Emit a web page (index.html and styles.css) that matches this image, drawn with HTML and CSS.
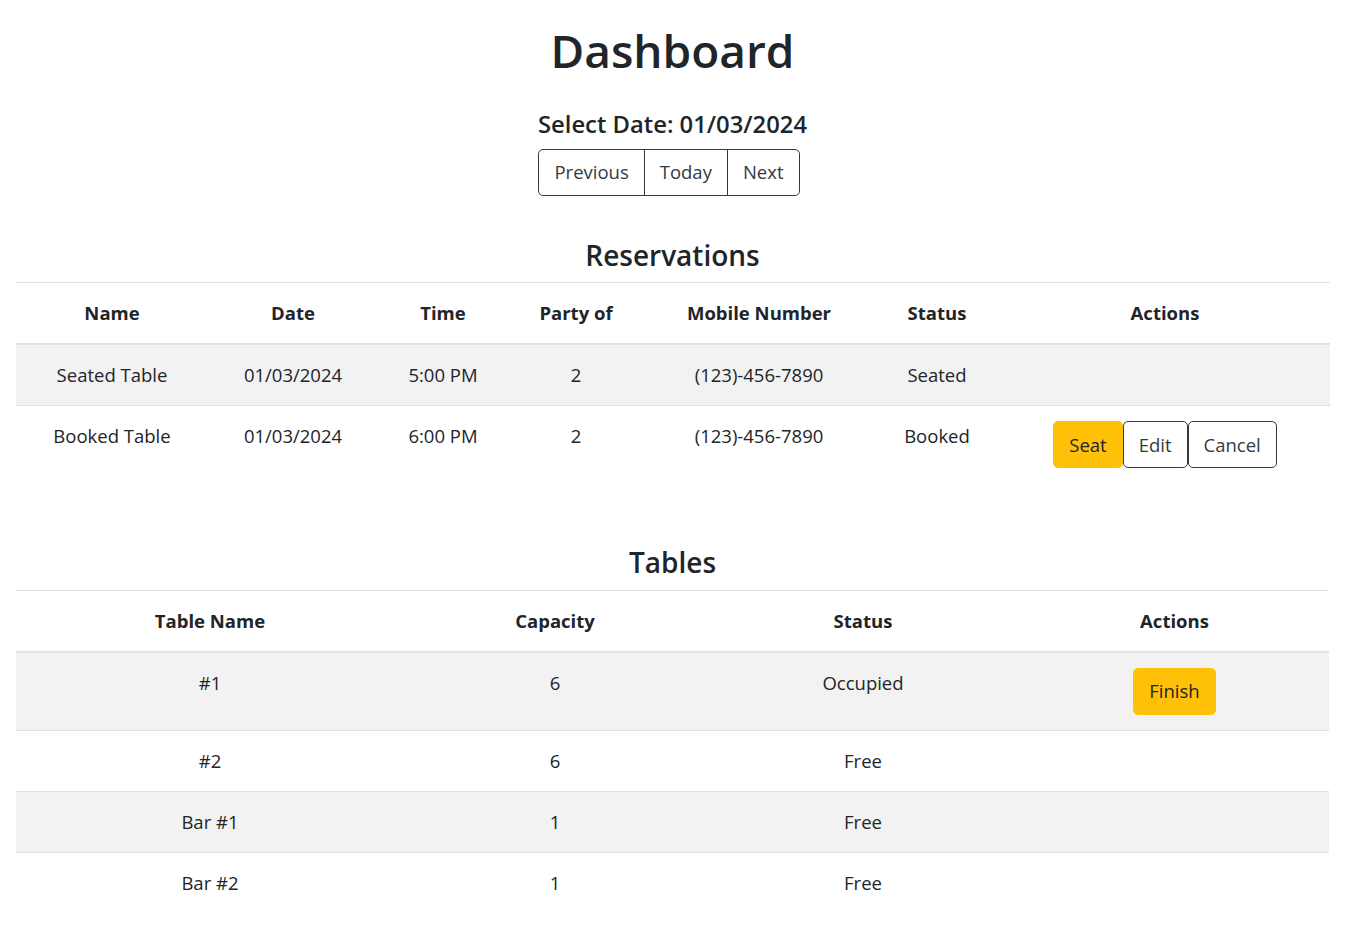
FILE: index.html
```html
<!DOCTYPE html>
<html lang="en">
<head>
<meta charset="utf-8">
<title>Dashboard</title>
<link rel="stylesheet" href="styles.css">
</head>
<body>
<main class="page">
  <h1 class="title">Dashboard</h1>
  <h4 class="date-label">Select Date: 01/03/2024</h4>
  <div class="date-nav">
    <div class="btn-group"><button class="btn btn-outline">Previous</button><button class="btn btn-outline">Today</button><button class="btn btn-outline">Next</button></div>
  </div>

  <h3 class="section-title">Reservations</h3>
  <table class="table">
    <colgroup>
      <col class="rc1"><col class="rc2"><col class="rc3"><col class="rc4"><col class="rc5"><col class="rc6"><col class="rc7">
    </colgroup>
    <thead>
      <tr><th>Name</th><th>Date</th><th>Time</th><th>Party of</th><th>Mobile Number</th><th>Status</th><th>Actions</th></tr>
    </thead>
    <tbody>
      <tr><td>Seated Table</td><td>01/03/2024</td><td>5:00 PM</td><td>2</td><td>(123)-456-7890</td><td>Seated</td><td></td></tr>
      <tr><td>Booked Table</td><td>01/03/2024</td><td>6:00 PM</td><td>2</td><td>(123)-456-7890</td><td>Booked</td><td><button class="btn btn-warning">Seat</button><button class="btn btn-outline">Edit</button><button class="btn btn-outline">Cancel</button></td></tr>
    </tbody>
  </table>

  <h3 class="section-title tables-title">Tables</h3>
  <table class="table">
    <colgroup>
      <col class="tc1"><col class="tc2"><col class="tc3"><col class="tc4">
    </colgroup>
    <thead>
      <tr><th>Table Name</th><th>Capacity</th><th>Status</th><th>Actions</th></tr>
    </thead>
    <tbody>
      <tr><td>#1</td><td>6</td><td>Occupied</td><td><button class="btn btn-warning">Finish</button></td></tr>
      <tr><td>#2</td><td>6</td><td>Free</td><td></td></tr>
      <tr><td>Bar #1</td><td>1</td><td>Free</td><td></td></tr>
      <tr><td>Bar #2</td><td>1</td><td>Free</td><td></td></tr>
    </tbody>
  </table>
</main>
</body>
</html>
```

FILE: styles.css
```css
* { box-sizing: border-box; }

body {
  margin: 0;
  font-family: "Open Sans", "Noto Sans", sans-serif;
  color: #212529;
  background: #fff;
}

.page {
  padding: 0 19px 0 16px;
  text-align: center;
}

.title {
  font-size: 46px;
  font-weight: 600;
  line-height: 1.2;
  margin: 23px 0 0;
}

.date-label {
  font-size: 23.8px;
  font-weight: 600;
  line-height: 1.2;
  margin: 32px 0 0;
}

.date-nav {
  margin-top: 10px;
  padding-right: 7px;
  display: flex;
  justify-content: center;
}

.btn-group {
  display: inline-flex;
}

.btn {
  display: inline-block;
  font-family: inherit;
  font-size: 18.5px;
  line-height: 30px;
  padding: 7.5px 15px;
  border: 1px solid #343a40;
  border-radius: 5px;
  background: #fff;
  color: #343a40;
  vertical-align: top;
  cursor: pointer;
}

.btn-warning {
  background: #ffc107;
  border-color: #ffc107;
  color: #212529;
}

.btn-group .btn { border-radius: 0; padding: 7.5px 15px; }
.btn-group .btn + .btn { margin-left: -1px; }
.btn-group .btn:first-child { border-radius: 5px 0 0 5px; }
.btn-group .btn:last-child { border-radius: 0 5px 5px 0; }

.section-title {
  font-size: 28px;
  font-weight: 600;
  line-height: 1.2;
  margin: 43px 0 10px;
}

.tables-title {
  margin-top: 63px;
}

.table {
  width: 100%;
  border-collapse: collapse;
  table-layout: fixed;
  font-size: 18.5px;
}

.table th,
.table td {
  padding: 15px 8px;
  line-height: 30px;
  border-top: 1px solid #dee2e6;
  vertical-align: top;
  text-align: center;
}

.table th {
  font-weight: 700;
  border-bottom: 2px solid #dee2e6;
}

.table tbody tr:nth-child(odd) { background: #f2f2f2; }

.rc1 { width: 192px; }
.rc2 { width: 170px; }
.rc3 { width: 130px; }
.rc4 { width: 136px; }
.rc5 { width: 230px; }
.rc6 { width: 126px; }
.rc7 { width: 330px; }

.tc1 { width: 388px; }
.tc2 { width: 302px; }
.tc3 { width: 314px; }
.tc4 { width: 309px; }
```
